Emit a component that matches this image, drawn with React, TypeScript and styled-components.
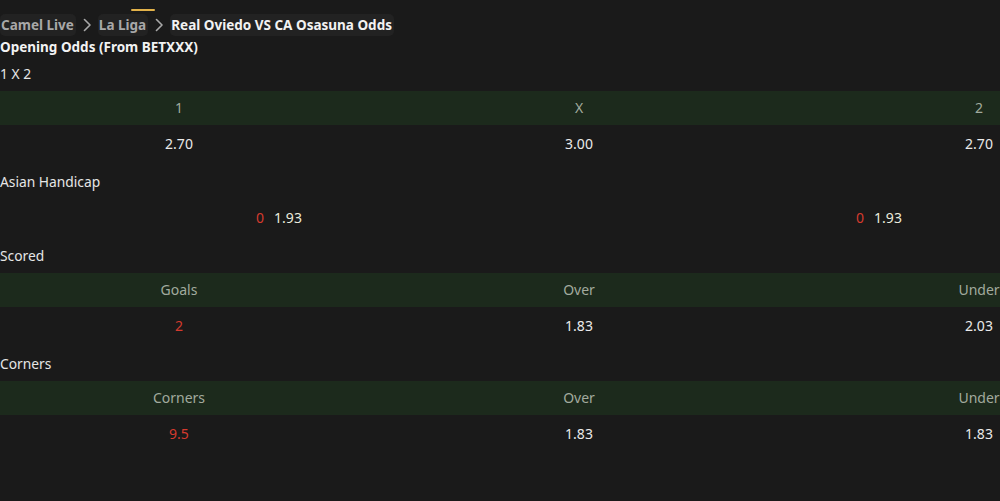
import React from "react";
import styled, { createGlobalStyle } from "styled-components";

const Global = createGlobalStyle`
  html, body {
    margin: 0;
    padding: 0;
    background: #1a1a1a;
    overflow: hidden;
  }
  body {
    font-family: "Noto Sans", "Open Sans", sans-serif;
    font-size: 14px;
    color: #e8e8e8;
  }
`;

const Page = styled.div`
  width: 1000px;
  height: 501px;
  overflow: hidden;
  background: #1a1a1a;
`;

const Crumbs = styled.nav`
  position: relative;
  display: flex;
  align-items: center;
  gap: 7px;
  padding-top: 13px;
  height: 24px;
`;

const Indicator = styled.span`
  position: absolute;
  left: 131px;
  top: 9px;
  width: 24px;
  height: 2px;
  background: #e2b24a;
  border-radius: 1px;
`;

const Crumb = styled.span<{ $current?: boolean }>`
  display: inline-block;
  padding: 0 2px 0 1px;
  height: 22px;
  line-height: 22px;
  font-weight: 700;
  font-size: 13.5px;
  border-radius: 5px;
  background: #222222;
  color: ${(p) => (p.$current ? "#f2f2f2" : "#a8a8a8")};
`;

const Chevron = styled.svg`
  width: 8px;
  height: 14px;
  flex: none;
`;

const Heading = styled.div`
  font-weight: 700;
  font-size: 13.5px;
  line-height: 20px;
  color: #f2f2f2;
`;

const SectionTitle = styled.div`
  height: 34px;
  line-height: 34px;
  font-size: 13.8px;
  color: #e6e6e6;
`;

const Table = styled.div<{ $cols: number }>`
  display: grid;
  grid-template-columns: repeat(${(p) => p.$cols}, 1fr);
  width: 1200px;
  margin-left: -21px;
`;

const HeadCell = styled.div`
  height: 34px;
  line-height: 34px;
  text-align: center;
  background: #1c2a1c;
  color: #a2aa9e;
  font-size: 14px;
`;

const Cell = styled.div<{ $red?: boolean }>`
  height: 40px;
  line-height: 38px;
  text-align: center;
  font-size: 14px;
  color: ${(p) => (p.$red ? "#d53a2e" : "#eaeaea")};
`;

const Handicap = styled.span`
  color: #d53a2e;
  margin-right: 10px;
`;

const Odd = styled.span`
  color: #ebebdc;
`;

const Arrow = () => (
  <Chevron viewBox="0 0 8 14">
    <path d="M1.5 1.5 L7 7 L1.5 12.5" fill="none" stroke="#a8a8a8" strokeWidth="1.6" strokeLinecap="round" strokeLinejoin="round" />
  </Chevron>
);

type Sec = { title: string; head: string[]; row: { v: string; red?: boolean }[] };

const sections: Sec[] = [
  {
    title: "Scored",
    head: ["Goals", "Over", "Under"],
    row: [{ v: "2", red: true }, { v: "1.83" }, { v: "2.03" }],
  },
  {
    title: "Corners",
    head: ["Corners", "Over", "Under"],
    row: [{ v: "9.5", red: true }, { v: "1.83" }, { v: "1.83" }],
  },
];

export default function App() {
  return (
    <Page>
      <Global />
      <Crumbs>
        <Indicator />
        <Crumb>Camel Live</Crumb>
        <Arrow />
        <Crumb>La Liga</Crumb>
        <Arrow />
        <Crumb $current>Real Oviedo VS CA Osasuna Odds</Crumb>
      </Crumbs>
      <Heading>Opening Odds (From BETXXX)</Heading>

      <SectionTitle>1 X 2</SectionTitle>
      <Table $cols={3}>
        <HeadCell>1</HeadCell>
        <HeadCell>X</HeadCell>
        <HeadCell>2</HeadCell>
        <Cell>2.70</Cell>
        <Cell>3.00</Cell>
        <Cell>2.70</Cell>
      </Table>

      <SectionTitle>Asian Handicap</SectionTitle>
      <Table $cols={2}>
        <Cell>
          <Handicap>0</Handicap>
          <Odd>1.93</Odd>
        </Cell>
        <Cell>
          <Handicap>0</Handicap>
          <Odd>1.93</Odd>
        </Cell>
      </Table>

      {sections.map((s) => (
        <React.Fragment key={s.title}>
          <SectionTitle>{s.title}</SectionTitle>
          <Table $cols={3}>
            {s.head.map((h, i) => (
              <HeadCell key={i}>{h}</HeadCell>
            ))}
            {s.row.map((c, i) => (
              <Cell key={i} $red={c.red}>
                {c.v}
              </Cell>
            ))}
          </Table>
        </React.Fragment>
      ))}
    </Page>
  );
}
